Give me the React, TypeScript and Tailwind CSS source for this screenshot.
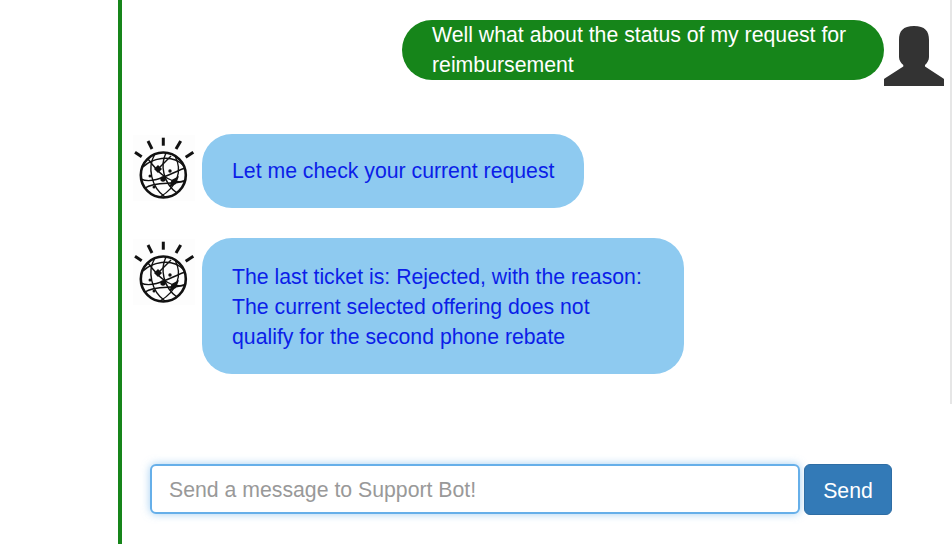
function BotIcon() {
  return (
    <svg width="62" height="66" viewBox="0 0 62 66" className="mt-[1px] shrink-0 bg-[#fdfdfd]" fill="none" stroke="#111">
      <g strokeWidth="3" strokeLinecap="butt">
        <path d="M2 17.3 8.7 21.7" />
        <path d="M15 6 19 14" />
        <path d="M30.3 2.7V10.7" />
        <path d="M47.7 6 43 14" />
        <path d="M60.3 17.3 52.7 22.3" />
      </g>
      <circle cx="30.3" cy="40" r="22.5" strokeWidth="2.6" />
      <g strokeWidth="1.4">
        <path d="M10 32C18 24 38 18 50 30" />
        <path d="M8 44C20 50 38 38 52 33" />
        <path d="M12 53C22 46 40 50 51 46" />
        <path d="M22 19C14 32 18 52 32 62" />
        <path d="M33 18C27 30 30 48 44 58" />
        <path d="M42 21C50 36 44 52 27 62" />
        <path d="M15 24C24 36 36 50 52 46" />
        <path d="M25 34 38 21" />
      </g>
      <g fill="#111" stroke="none">
        <path d="M25 30 29 34 25 38 21 34Z" />
        <circle cx="30" cy="44" r="2.7" />
        <path d="M46 41 43 49 36.500 52 38.500 45Z" />
        <circle cx="37" cy="36" r="1.7" />
        <circle cx="17" cy="41" r="1.5" />
        <circle cx="21" cy="52" r="1.5" />
      </g>
    </svg>
  );
}

function UserIcon() {
  return (
    <svg width="62" height="66" viewBox="0 0 62 66" className="mt-[2px] shrink-0">
      <path
        fill="#333"
        d="M30 4C19 4 15 9 15 18V35C15 38.500 17 41 19.300 43L19.300 44.500L1 56.300L0 57V64H60V57L59 56.300L41 44.500V43C43 41 45 38.500 45 35V18C45 9 41 4 30 4Z"
      />
    </svg>
  );
}

function BotMessage({ lines, wide }: { lines: string[]; wide?: boolean }) {
  return (
    <div className="flex items-start pl-[11px]">
      <BotIcon />
      <div className={`ml-[7px] rounded-[30px] bg-[#8ecaf0] pl-[30px] pr-[20px] text-[#0b1ee8] ${wide ? "w-[482px] pb-[22px] pt-[24px]" : "w-[382px] pb-[22px] pt-[22px]"}`}>
        {lines.map((line) => (
          <div key={line}>{line}</div>
        ))}
      </div>
    </div>
  );
}

export default function App() {
  return (
    <div className="relative h-[544px] w-[952px] overflow-hidden bg-white font-['Liberation_Sans',Arial,sans-serif] text-[21.25px] leading-[30px]">
      <div className="ml-[118px] flex h-full flex-col border-l-4 border-[#16851a]">
        {/* Messages */}
        <div className="flex justify-end pr-[6px] pt-[20px]">
          <div className="h-[60px] w-[482px] rounded-[30px] bg-[#16851a] pl-[30px] pr-[20px] text-white">
            Well what about the status of my request for reimbursement
          </div>
          <UserIcon />
        </div>
        <div className="mt-[46px]">
          <BotMessage lines={["Let me check your current request"]} />
        </div>
        <div className="mt-[30px]">
          <BotMessage
            wide
            lines={[
              "The last ticket is: Rejected, with the reason:",
              "The current selected offering does not",
              "qualify for the second phone rebate",
            ]}
          />
        </div>

        {/* Input */}
        <div className="mt-[90px] flex items-start gap-[4px] pl-[28px]">
          <input
            type="text"
            placeholder="Send a message to Support Bot!"
            className="h-[50px] w-[650px] rounded-[6px] border-2 border-[#66afe9] bg-white px-[17px] pt-[3px] text-[21.25px] text-[#555] shadow-[0_0_8px_rgba(102,175,233,0.6)] outline-none placeholder:text-[#999]"
          />
          <button className="h-[51px] w-[88px] rounded-[6px] border border-[#2e6da4] bg-[#337ab7] pt-[3px] text-[21.25px] text-white">
            Send
          </button>
        </div>
      </div>

      {/* Scrollbar thumb */}
      <div className="absolute right-0 top-0 h-[404px] w-[2px] bg-[#e6e6e6]" />
    </div>
  );
}
